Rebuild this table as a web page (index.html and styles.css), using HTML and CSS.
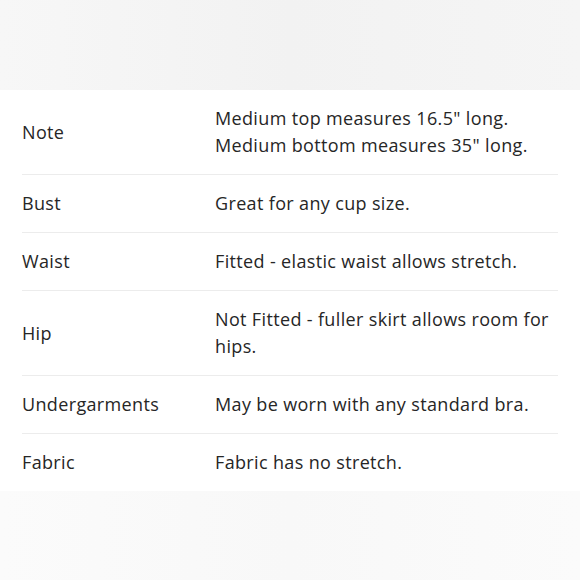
FILE: index.html
```html
<!DOCTYPE html>
<html>
<head>
<meta charset="utf-8">
<link rel="stylesheet" href="styles.css">
</head>
<body>
<div class="top"></div>
<div class="sheet">
  <div class="row">
    <div class="label">Note</div>
    <div class="value">Medium top measures 16.5" long.<br>Medium bottom measures 35" long.</div>
  </div>
  <div class="row">
    <div class="label">Bust</div>
    <div class="value">Great for any cup size.</div>
  </div>
  <div class="row">
    <div class="label">Waist</div>
    <div class="value">Fitted - elastic waist allows stretch.</div>
  </div>
  <div class="row">
    <div class="label">Hip</div>
    <div class="value">Not Fitted - fuller skirt allows room for hips.</div>
  </div>
  <div class="row">
    <div class="label">Undergarments</div>
    <div class="value">May be worn with any standard bra.</div>
  </div>
  <div class="row last">
    <div class="label">Fabric</div>
    <div class="value">Fabric has no stretch.</div>
  </div>
</div>
<div class="bottom"></div>
</body>
</html>
```
FILE: styles.css
```css
html, body {
  margin: 0;
  padding: 0;
  width: 580px;
  height: 580px;
  overflow: hidden;
  background: #f9f9f9;
}
body {
  font-family: "Open Sans", "Liberation Sans", sans-serif;
  color: #262626;
  display: flex;
  flex-direction: column;
}
.top {
  height: 90px;
  background: linear-gradient(90deg, #f7f7f7 0%, #f2f2f2 50%, #f5f5f5 100%);
}
.sheet {
  background: #fff;
  padding: 0 22px;
}
.row {
  display: flex;
  align-items: center;
  padding: 15px 0;
  min-height: 27px;
  border-bottom: 1px solid #ececec;
  font-size: 18px;
  line-height: 27px;
  letter-spacing: 0.35px;
}
.row.last {
  border-bottom: none;
}
.label {
  width: 193px;
  flex: none;
}
.value {
  flex: 1;
}
.bottom {
  flex: 1;
  background: linear-gradient(90deg, #fbfbfb 0%, #f8f8f8 50%, #fbfbfb 100%);
}
```
